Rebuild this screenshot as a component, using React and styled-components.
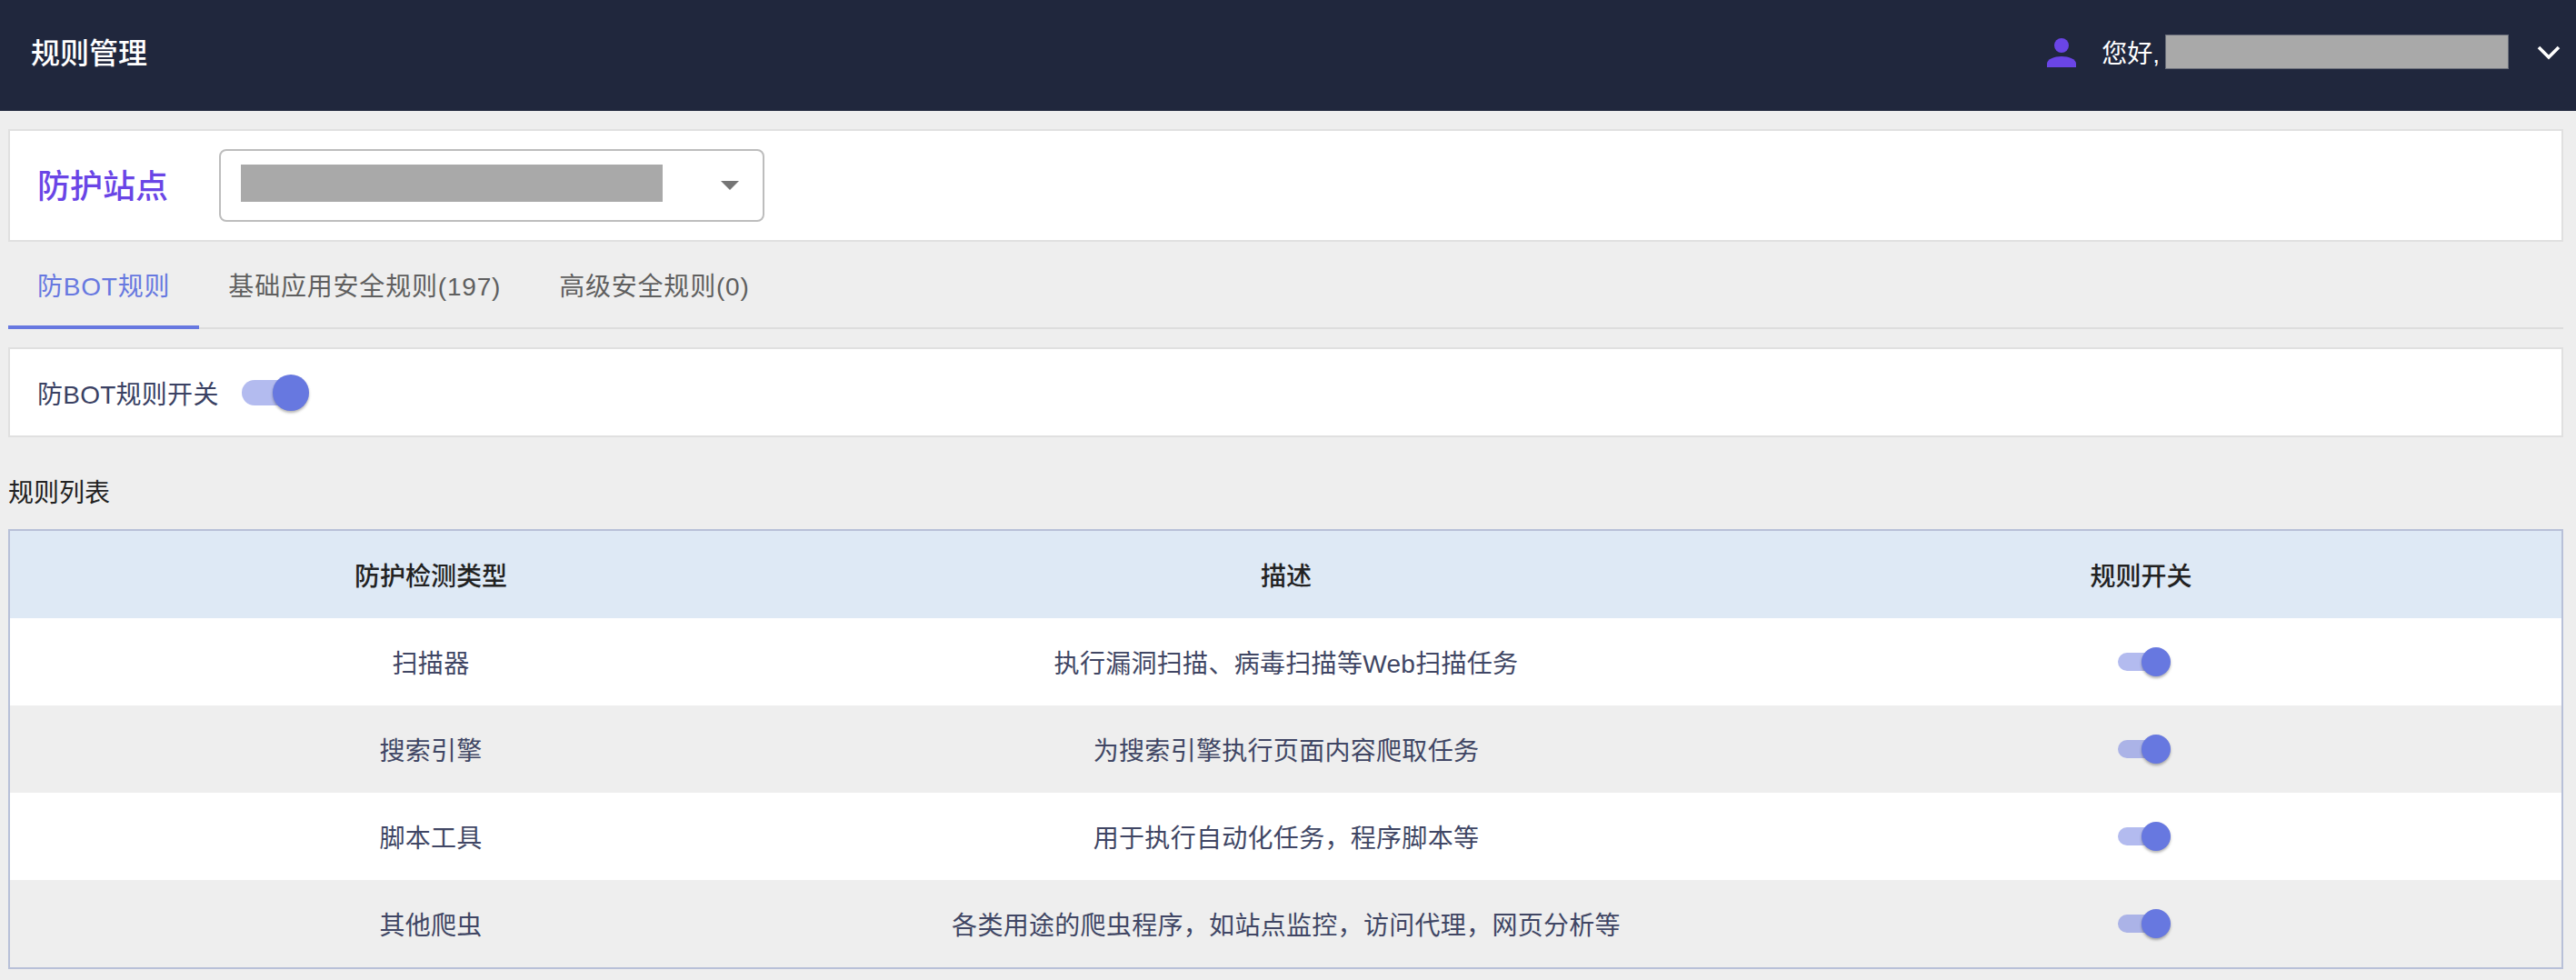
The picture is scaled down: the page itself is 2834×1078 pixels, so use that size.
import React from "react";
import styled, { createGlobalStyle } from "styled-components";

const GlobalStyle = createGlobalStyle`
  html, body {
    margin: 0;
    padding: 0;
    background: #eeeeee;
    font-family: "Liberation Sans", "Noto Sans CJK SC", sans-serif;
  }
  * { box-sizing: border-box; }
`;

const Header = styled.header`
  height: 122px;
  background: #20273d;
  color: #fff;
  display: flex;
  align-items: center;
  justify-content: space-between;
  padding: 0 16px 8px 34px;
`;

const HeaderTitle = styled.div`
  font-size: 32px;
  font-weight: 500;
  margin-bottom: 2px;
`;

const UserBox = styled.div`
  display: flex;
  align-items: center;
  font-size: 28px;
`;

const UserIcon = styled.svg`
  width: 32px;
  height: 32px;
  margin: 2px 28px 0 0;
  fill: #6a45e6;
`;

const Masked = styled.div`
  background: #a9a9a9;
  width: ${(p) => p.$w}px;
  height: ${(p) => p.$h}px;
`;

const UserMask = styled(Masked)`
  margin-left: 6px;
  border: 1px solid #6c707c;
`;

const Chevron = styled.svg`
  width: 28px;
  height: 28px;
  margin: 2px 0 0 30px;
  fill: none;
  stroke: #fff;
  stroke-width: 3.6;
`;

const Page = styled.main`
  padding: 20px 14px 12px 9px;
`;

const Card = styled.section`
  background: #fff;
  border: 2px solid #e0e0e0;
  display: flex;
  align-items: center;
  padding-left: 30px;
`;

const SiteCard = styled(Card)`
  height: 124px;
`;

const SiteLabel = styled.div`
  color: #6a45e6;
  font-size: 36px;
  font-weight: 500;
  width: 200px;
  padding-bottom: 5px;
`;

const Select = styled.div`
  width: 600px;
  height: 80px;
  border: 2px solid #bdbdbd;
  border-radius: 8px;
  display: flex;
  align-items: center;
  justify-content: space-between;
  padding: 0 26px 6px 22px;
`;

const Caret = styled.span`
  width: 0;
  height: 0;
  margin-top: 6px;
  border-left: 10px solid transparent;
  border-right: 10px solid transparent;
  border-top: 10px solid #757575;
`;

const Tabs = styled.nav`
  display: flex;
  height: 96px;
  margin-bottom: 20px;
  border-bottom: 2px solid #dddddd;
`;

const Tab = styled.div`
  height: 96px;
  padding: 2px 32px 0;
  display: flex;
  align-items: center;
  font-size: 28px;
  letter-spacing: 0.8px;
  color: ${(p) => (p.$active ? "#6778e0" : "#5f5f5f")};
  border-bottom: 4px solid ${(p) => (p.$active ? "#6778e0" : "transparent")};
`;

const SwitchCard = styled(Card)`
  height: 99px;
  font-size: 28px;
  letter-spacing: 0.26px;
  color: #3a4163;
`;

const SwitchLabel = styled.span`
  margin-right: 25px;
`;

const Track = styled.span`
  position: relative;
  display: block;
  flex: none;
  width: ${(p) => (p.$big ? 72 : 56)}px;
  height: ${(p) => (p.$big ? 28 : 20)}px;
  border-radius: 14px;
  background: rgba(103, 120, 224, 0.5);
`;

const Thumb = styled.span`
  position: absolute;
  right: -2px;
  top: 50%;
  width: ${(p) => (p.$big ? 40 : 32)}px;
  height: ${(p) => (p.$big ? 40 : 32)}px;
  transform: translateY(-50%);
  border-radius: 50%;
  background: #6778e0;
  box-shadow: 0 2px 3px rgba(0, 0, 0, 0.3);
`;

const ListTitle = styled.h2`
  margin: 0;
  height: 101px;
  padding-top: 16px;
  display: flex;
  align-items: center;
  font-size: 28px;
  font-weight: 400;
  color: #222;
`;

const Table = styled.div`
  border: 2px solid #b8c0d8;
`;

const Row = styled.div`
  display: grid;
  grid-template-columns: 926px 956px 1fr;
  height: 96px;
  align-items: center;
  text-align: center;
  font-size: 28px;
  letter-spacing: 0.3px;
  color: #404664;
  background: ${(p) => (p.$odd ? "#eeeeee" : "#fff")};
`;

const HeadRow = styled(Row)`
  background: #dee9f5;
  color: #222;
  font-weight: 500;
  letter-spacing: 0;
`;

const SwitchCell = styled.div`
  display: flex;
  justify-content: center;
  padding-left: 5px;
`;

const rules = [
  { type: "扫描器", desc: "执行漏洞扫描、病毒扫描等Web扫描任务" },
  { type: "搜索引擎", desc: "为搜索引擎执行页面内容爬取任务" },
  { type: "脚本工具", desc: "用于执行自动化任务，程序脚本等" },
  { type: "其他爬虫", desc: "各类用途的爬虫程序，如站点监控，访问代理，网页分析等" },
];

const Switch = ({ big }) => (
  <Track $big={big}>
    <Thumb $big={big} />
  </Track>
);

const App = () => (
  <>
    <GlobalStyle />
    <Header>
      <HeaderTitle>规则管理</HeaderTitle>
      <UserBox>
        <UserIcon viewBox="0 0 32 32">
          <circle cx="16" cy="8" r="8" />
          <path d="M0 32v-4c0-5 8-8 16-8s16 3 16 8v4z" />
        </UserIcon>
        您好,
        <UserMask $w={378} $h={38} />
        <Chevron viewBox="0 0 28 28">
          <path d="M3 8l11 11 11-11" />
        </Chevron>
      </UserBox>
    </Header>
    <Page>
      <SiteCard>
        <SiteLabel>防护站点</SiteLabel>
        <Select>
          <Masked $w={464} $h={41} />
          <Caret />
        </Select>
      </SiteCard>
      <Tabs>
        <Tab $active>防BOT规则</Tab>
        <Tab>基础应用安全规则(197)</Tab>
        <Tab>高级安全规则(0)</Tab>
      </Tabs>
      <SwitchCard>
        <SwitchLabel>防BOT规则开关</SwitchLabel>
        <Switch big />
      </SwitchCard>
      <ListTitle>规则列表</ListTitle>
      <Table>
        <HeadRow>
          <div>防护检测类型</div>
          <div>描述</div>
          <div>规则开关</div>
        </HeadRow>
        {rules.map((r, idx) => (
          <Row key={r.type} $odd={idx % 2 === 1}>
            <div>{r.type}</div>
            <div>{r.desc}</div>
            <SwitchCell><Switch /></SwitchCell>
          </Row>
        ))}
      </Table>
    </Page>
  </>
);

export default App;
